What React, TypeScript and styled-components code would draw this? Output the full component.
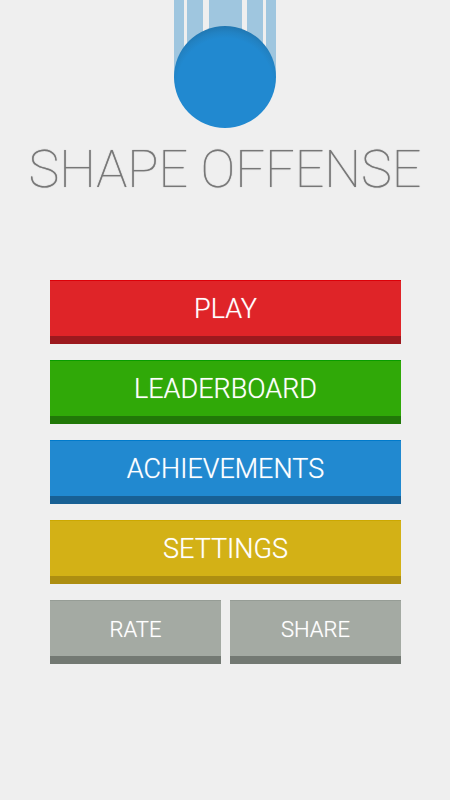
import React from "react";
import styled, { createGlobalStyle } from "styled-components";

const Global = createGlobalStyle`
  * { box-sizing: border-box; }
  body { margin: 0; background: #efefef; font-family: Roboto, "Open Sans", sans-serif; }
`;

const Screen = styled.main`
  display: flex;
  flex-direction: column;
  align-items: center;
  min-height: 100vh;
`;

const Logo = styled.svg`
  display: block;
  width: 104px;
  height: 130px;
`;

const Title = styled.h1`
  margin: 8px 0 0;
  font-size: 52px;
  line-height: 64px;
  font-weight: 100;
  color: #777;
  text-shadow: 0 0 1px #888;
  white-space: nowrap;
`;

const Menu = styled.nav`
  display: flex;
  flex-direction: column;
  gap: 16px;
  width: 100%;
  padding: 78px 49px 0 50px;
`;

const Pair = styled.div`
  display: grid;
  grid-template-columns: 1fr 1fr;
  gap: 9px;
`;

const MenuButton = styled.button<{
  $face: string;
  $edge: string;
  $rim: string;
  $small?: boolean;
}>`
  height: 64px;
  padding: 2px 0 0;
  border: 0;
  border-bottom: 8px solid ${(p) => p.$edge};
  background: ${(p) => p.$face};
  box-shadow: inset 0 1px ${(p) => p.$rim};
  color: #fff;
  font-family: inherit;
  font-size: ${(p) => (p.$small ? 22 : 27)}px;
  font-weight: 300;
  text-shadow: 0 0 1px rgba(255, 255, 255, 0.6);
  cursor: pointer;
`;

export default function App() {
  return (
    <>
      <Global />
      <Screen>
        <Logo viewBox="0 0 104 130" aria-hidden="true">
          <defs>
            <radialGradient id="ball" gradientUnits="userSpaceOnUse" cx="52" cy="86" r="60">
              <stop offset="0.8" stopColor="#2189d0" />
              <stop offset="0.9" stopColor="#2282c3" />
              <stop offset="1" stopColor="#2076b0" />
            </radialGradient>
          </defs>
          <path fill="#9fc6df" d="M1 0h10v78H1zM14 0h16v78H14zM36 0h33v78H36zM74 0h16v78H74zM93 0h10v78H93z" />
          <circle cx="52" cy="77" r="51" fill="url(#ball)" />
        </Logo>
        <Title>SHAPE OFFENSE</Title>
        <Menu>
          <MenuButton $face="#df2428" $edge="#9c191e" $rim="#dc0008">PLAY</MenuButton>
          <MenuButton $face="#30a908" $edge="#217808" $rim="#089c00">LEADERBOARD</MenuButton>
          <MenuButton $face="#2189d0" $edge="#186094" $rim="#007acb">ACHIEVEMENTS</MenuButton>
          <MenuButton $face="#d3b116" $edge="#ad8e11" $rim="#cca800">SETTINGS</MenuButton>
          <Pair>
            <MenuButton $small $face="#a4aaa3" $edge="#737973" $rim="#969d96">RATE</MenuButton>
            <MenuButton $small $face="#a4aaa3" $edge="#737973" $rim="#969d96">SHARE</MenuButton>
          </Pair>
        </Menu>
      </Screen>
    </>
  );
}
